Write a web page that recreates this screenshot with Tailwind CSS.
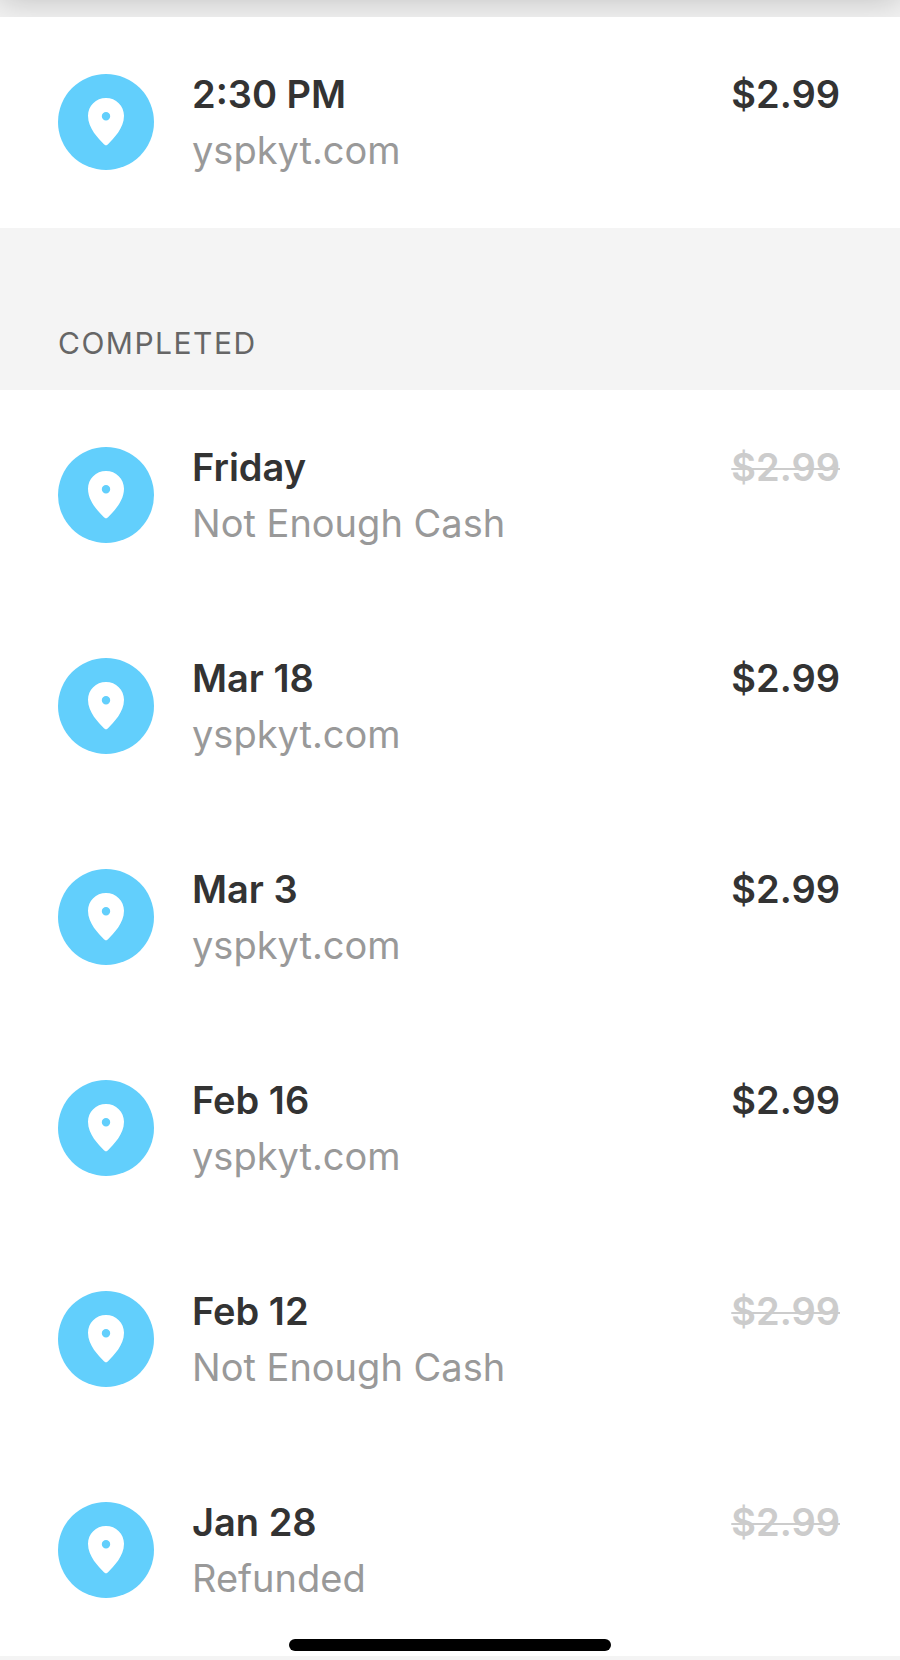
<!DOCTYPE html>
<html lang="en">
<head>
  <meta charset="UTF-8">
  <meta name="viewport" content="width=device-width, initial-scale=1.0">
  <title>Activity</title>
  <script src="https://cdn.jsdelivr.net/npm/@tailwindcss/browser@4"></script>
</head>
<body class="min-h-screen bg-[#f4f4f4] font-['Inter','Liberation_Sans',sans-serif] text-[38px] leading-14 text-[#333333]">
  <!-- Pin icon shared by all rows -->
  <svg class="hidden" aria-hidden="true">
    <symbol id="pin" viewBox="0 0 96 96">
      <path fill="currentColor" fill-rule="evenodd" d="M48 24C38 24 30 31.800 30 41.800C30 54.500 40.500 64.500 46.200 70.600Q48 72.200 49.800 70.600C55.500 64.500 66 54.500 66 41.800C66 31.800 58 24 48 24ZM48 38a4.200 4.200 0 1 1 0 8.400a4.200 4.200 0 1 1 0-8.400Z"/>
    </symbol>
  </svg>

  <header class="relative h-[17px] overflow-hidden bg-[#f2f2f2]">
    <div class="absolute inset-x-0 -top-20 h-20 shadow-[0_0_32px_rgba(0,0,0,0.22)]"></div>
  </header>

  <main>
    <ul class="bg-white">
      <li class="flex items-center pt-[49px] pb-[50px] pl-[58px] pr-[60px]">
        <svg class="size-24 shrink-0 rounded-full bg-[#62cffc] text-white"><use href="#pin"/></svg>
        <div class="ml-[38px] flex-1">
          <h3 class="font-semibold">2:30 PM</h3>
          <p class="text-[#999999]">yspkyt.com</p>
        </div>
        <span class="self-start font-semibold">$2.99</span>
      </li>
    </ul>

    <h2 class="pt-[95px] pb-[27px] pl-[58px] text-[30px] leading-10 tracking-wider text-[#666666]">COMPLETED</h2>

    <ul class="bg-white">
      <li class="flex items-center pt-[49px] pb-[50px] pl-[58px] pr-[60px]">
        <svg class="size-24 shrink-0 rounded-full bg-[#62cffc] text-white"><use href="#pin"/></svg>
        <div class="ml-[38px] flex-1">
          <h3 class="font-semibold">Friday</h3>
          <p class="text-[#999999]">Not Enough Cash</p>
        </div>
        <s class="self-start font-semibold text-[#cccccc] decoration-2">$2.99</s>
      </li>
      <li class="flex items-center pt-[49px] pb-[50px] pl-[58px] pr-[60px]">
        <svg class="size-24 shrink-0 rounded-full bg-[#62cffc] text-white"><use href="#pin"/></svg>
        <div class="ml-[38px] flex-1">
          <h3 class="font-semibold">Mar 18</h3>
          <p class="text-[#999999]">yspkyt.com</p>
        </div>
        <span class="self-start font-semibold">$2.99</span>
      </li>
      <li class="flex items-center pt-[49px] pb-[50px] pl-[58px] pr-[60px]">
        <svg class="size-24 shrink-0 rounded-full bg-[#62cffc] text-white"><use href="#pin"/></svg>
        <div class="ml-[38px] flex-1">
          <h3 class="font-semibold">Mar 3</h3>
          <p class="text-[#999999]">yspkyt.com</p>
        </div>
        <span class="self-start font-semibold">$2.99</span>
      </li>
      <li class="flex items-center pt-[49px] pb-[50px] pl-[58px] pr-[60px]">
        <svg class="size-24 shrink-0 rounded-full bg-[#62cffc] text-white"><use href="#pin"/></svg>
        <div class="ml-[38px] flex-1">
          <h3 class="font-semibold">Feb 16</h3>
          <p class="text-[#999999]">yspkyt.com</p>
        </div>
        <span class="self-start font-semibold">$2.99</span>
      </li>
      <li class="flex items-center pt-[49px] pb-[50px] pl-[58px] pr-[60px]">
        <svg class="size-24 shrink-0 rounded-full bg-[#62cffc] text-white"><use href="#pin"/></svg>
        <div class="ml-[38px] flex-1">
          <h3 class="font-semibold">Feb 12</h3>
          <p class="text-[#999999]">Not Enough Cash</p>
        </div>
        <s class="self-start font-semibold text-[#cccccc] decoration-2">$2.99</s>
      </li>
      <li class="flex items-center pt-[49px] pb-[50px] pl-[58px] pr-[60px]">
        <svg class="size-24 shrink-0 rounded-full bg-[#62cffc] text-white"><use href="#pin"/></svg>
        <div class="ml-[38px] flex-1">
          <h3 class="font-semibold">Jan 28</h3>
          <p class="text-[#999999]">Refunded</p>
        </div>
        <s class="self-start font-semibold text-[#cccccc] decoration-2">$2.99</s>
      </li>
    </ul>
  </main>

  <!-- Home indicator -->
  <div class="fixed bottom-[9px] left-1/2 h-3 w-[322px] -translate-x-1/2 rounded-full bg-black"></div>
</body>
</html>
